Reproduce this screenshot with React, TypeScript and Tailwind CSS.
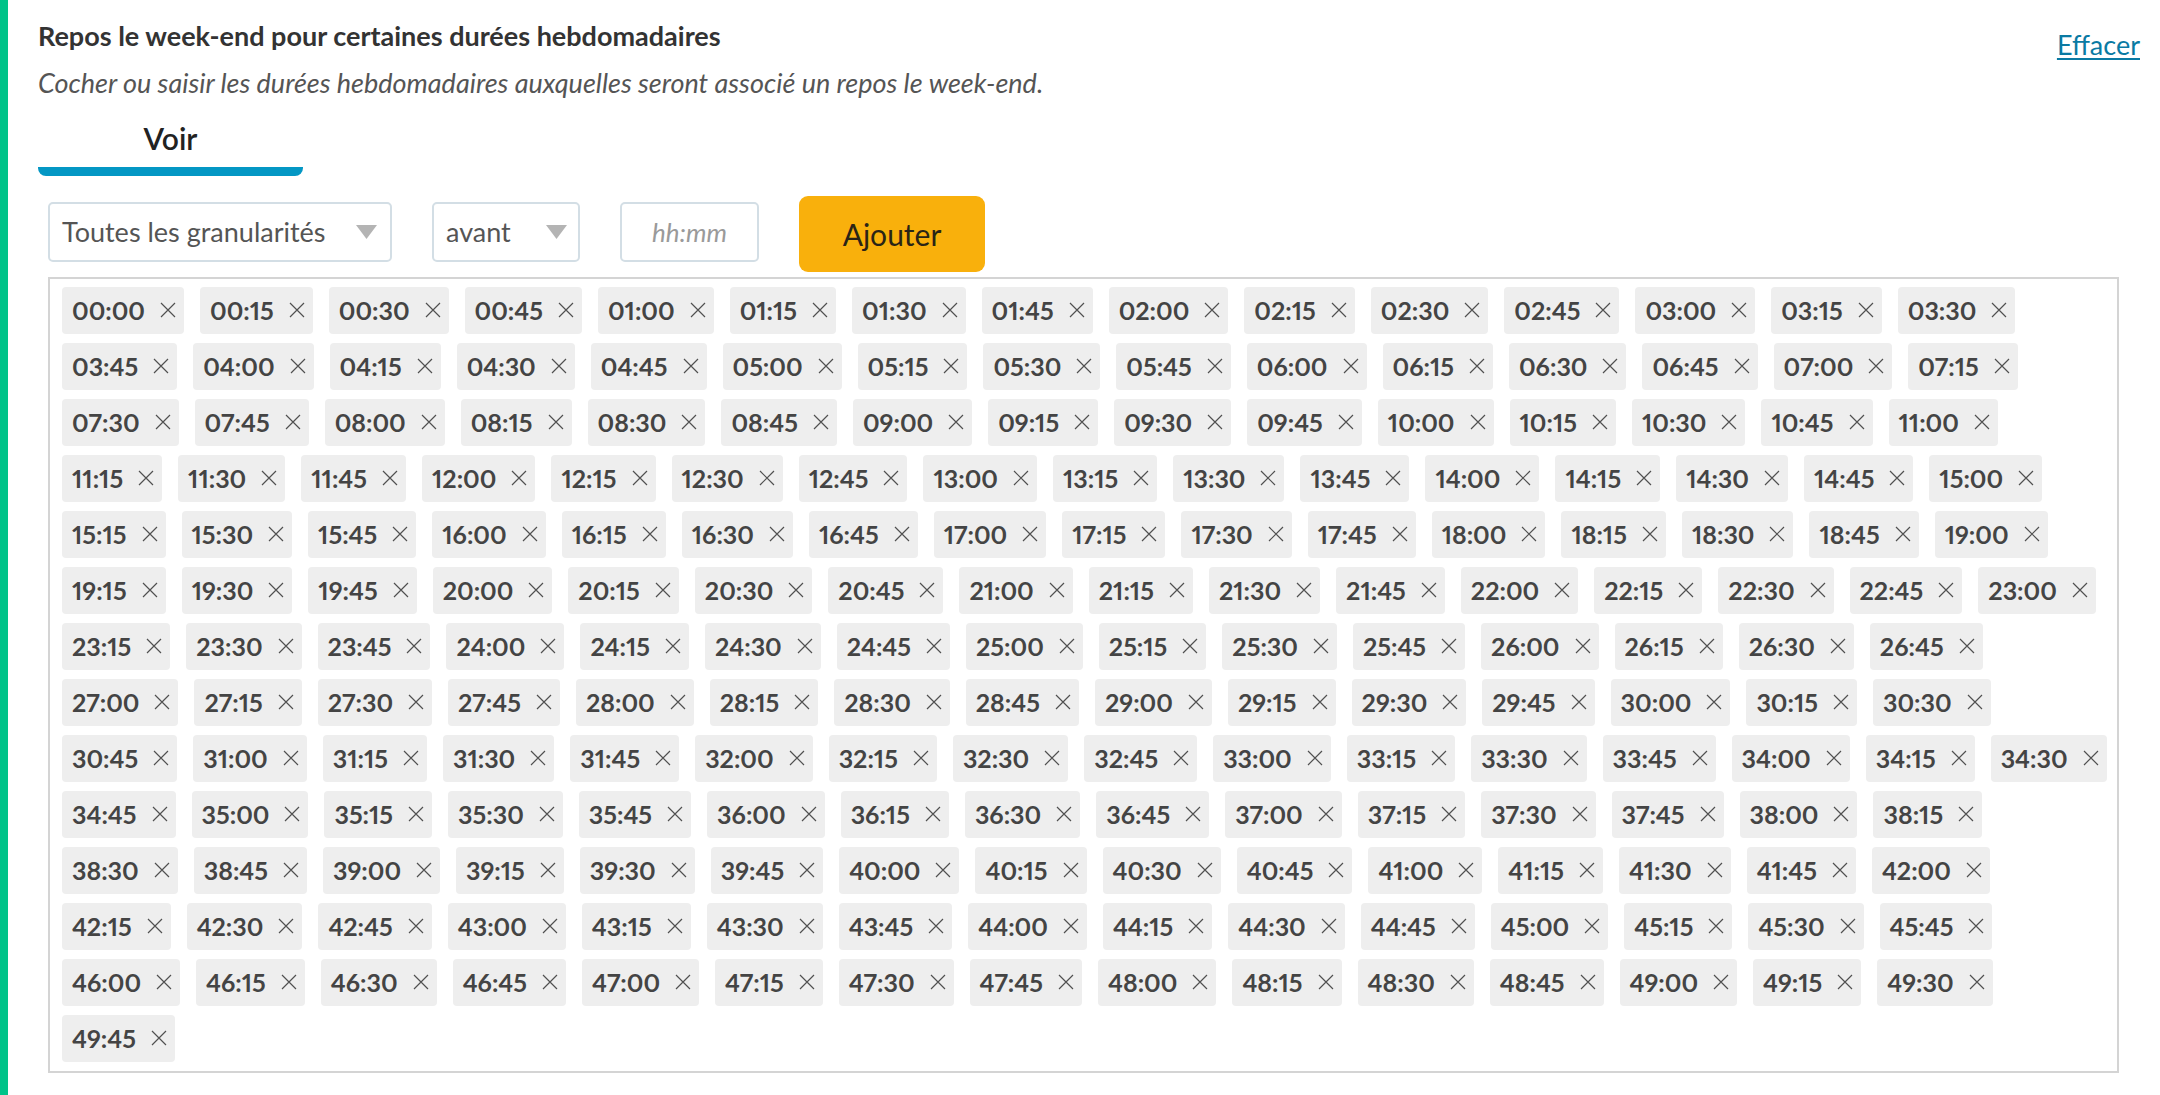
import React from "react";

const durations: string[] = Array.from({ length: 200 }, (_, i) => {
  const total = i * 15;
  const h = Math.floor(total / 60);
  const m = total % 60;
  return `${String(h).padStart(2, "0")}:${String(m).padStart(2, "0")}`;
});

function Caret() {
  return (
    <svg width="21" height="14" viewBox="0 0 21 14" className="shrink-0">
      <polygon points="0,0 21,0 10.5,14" fill="#b4b4b4" />
    </svg>
  );
}

function RemoveMark() {
  return (
    <svg width="16" height="16" viewBox="0 0 16 16" className="ml-[15px] shrink-0">
      <path d="M1 1 L15 15 M15 1 L1 15" stroke="#505050" strokeWidth="1.2" fill="none" />
    </svg>
  );
}

function DurationTag({ label }: { label: string }) {
  return (
    <span className="flex h-[47px] items-center rounded-[4px] bg-[#eeeeee] pl-[10px] pr-[8px] text-[25px] font-bold leading-none text-[#444444] proportional-nums">
      {label}
      <RemoveMark />
    </span>
  );
}

export default function App() {
  return (
    <div className="flex min-h-screen bg-white font-['Lato',sans-serif]">
      <div className="w-[8px] shrink-0 bg-[#00c389]" />
      <div className="flex min-w-0 flex-1 flex-col pl-[30px] pr-[20px]">
        <div className="flex items-start justify-between">
          <div className="flex flex-col">
            <h2 className="mt-[20px] text-[27px] font-bold leading-[1.2] text-[#333333]">
              Repos le week-end pour certaines durées hebdomadaires
            </h2>
            <p className="mt-[15px] text-[27px] italic leading-[1.2] text-[#555555]">
              Cocher ou saisir les durées hebdomadaires auxquelles seront associé un repos le week-end.
            </p>
          </div>
          <a href="#" className="mt-[29px] text-[27px] leading-[1.2] text-[#0a7aa3] underline underline-offset-[3px]">
            Effacer
          </a>
        </div>

        <div className="mt-[20px] flex w-[265px] flex-col items-center">
          <span className="text-[30px] font-semibold leading-[1.2] text-[#222222]">Voir</span>
          <span className="mt-[11px] h-[9px] w-full rounded-b-[8px] bg-[#0497c4]" />
        </div>

        <div className="ml-[10px] mt-[20px] flex items-start gap-[40px]">
          <div className="mt-[6px] flex h-[60px] w-[344px] items-center justify-between rounded-[5px] border-2 border-[#d3dee5] pl-[12px] pr-[13px]">
            <span className="text-[27px] leading-none text-[#555555]">Toutes les granularités</span>
            <Caret />
          </div>
          <div className="mt-[6px] flex h-[60px] w-[148px] items-center justify-between rounded-[5px] border-2 border-[#d3dee5] pl-[12px] pr-[11px]">
            <span className="text-[27px] leading-none text-[#555555]">avant</span>
            <Caret />
          </div>
          <div className="mt-[6px] flex h-[60px] w-[139px] items-center justify-center rounded-[5px] border-2 border-[#d3dee5]">
            <span className="text-[26px] italic leading-none text-[#9a9a9a]">hh:mm</span>
          </div>
          <button className="flex h-[76px] w-[186px] items-center justify-center rounded-[9px] bg-[#f9b00c] text-[30px] leading-none text-[#2a2416]">
            Ajouter
          </button>
        </div>

        <div className="ml-[10px] mr-[21px] mt-[5px] flex flex-wrap content-start gap-x-[16px] gap-y-[9px] border-2 border-[#d4d4d4] pb-[9px] pl-[12px] pr-[8px] pt-[8px]">
          {durations.map((d) => (
            <DurationTag key={d} label={d} />
          ))}
        </div>
      </div>
    </div>
  );
}
